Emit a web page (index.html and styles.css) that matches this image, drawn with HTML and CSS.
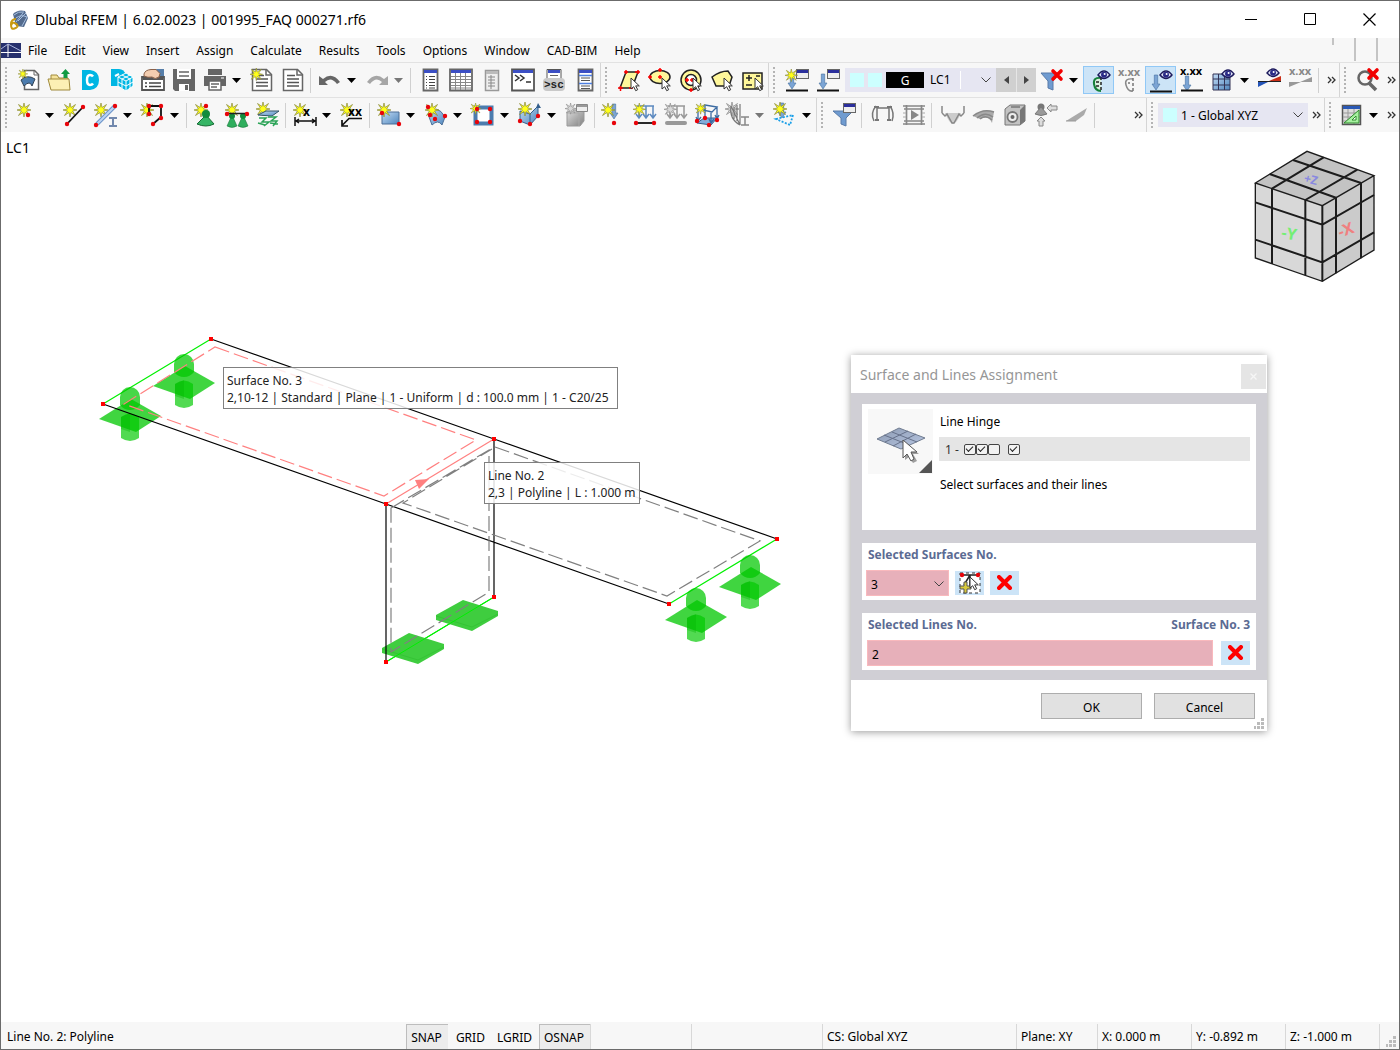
FILE: index.html
```html
<!DOCTYPE html>
<html lang="en">
<head>
<meta charset="utf-8">
<title>Dlubal RFEM</title>
<link rel="stylesheet" href="styles.css">
</head>
<body>
<svg class="defs" width="0" height="0" aria-hidden="true">
  <defs>
    <linearGradient id="blue" x1="0" y1="0" x2="1" y2="1"><stop offset="0" stop-color="#c3dcf5"/><stop offset="1" stop-color="#4f86bd"/></linearGradient>
    <linearGradient id="grey" x1="0" y1="0" x2="1" y2="1"><stop offset="0" stop-color="#dedede"/><stop offset="1" stop-color="#808080"/></linearGradient>
    <linearGradient id="plate" x1="0" y1="0" x2="1" y2="1"><stop offset="0" stop-color="#8c9ab2"/><stop offset="1" stop-color="#b9c8e4"/></linearGradient>
    <path id="star" d="M7 0l1 4.500L12.500 1.500 9.500 6 14 7 9.500 8 12.500 12.500 8 9.500 7 14 6 9.500 1.500 12.500 4.500 8 0 7l4.500-1L1.500 1.500 6 4.500z" fill="#ffff1a" stroke="#8a8a3c" stroke-width=".7"/>
    <path id="star-off" d="M7 0l1 4.500L12.500 1.500 9.500 6 14 7 9.500 8 12.500 12.500 8 9.500 7 14 6 9.500 1.500 12.500 4.500 8 0 7l4.500-1L1.500 1.500 6 4.500z" fill="#d8d8d8" stroke="#909090" stroke-width=".8"/>
    <circle id="dot" r="2.200" fill="#e8040a"/>
    <path id="cross" d="M2 2l8 8M10 2l-8 8" stroke="#f20000" stroke-width="3.600" stroke-linecap="round"/>
    <path id="cursor" d="M0 0v11l2.700-2.300 2 4 2-1-2-3.800H8.300z" fill="#fff" stroke="#333"/>
    <path id="down" d="M-1.700 0h3.400v9H4L0 15-4 9h2.300z" fill="#7ba4d4" stroke="#44709f" stroke-width=".6"/>
    <g id="window"><rect x=".5" y=".5" width="12" height="9" fill="#eee" stroke="#666"/><path d="M1 1h11v3H1z" fill="#2b2f9c"/></g>
    <g id="eye"><path d="M0 5Q6-3 12 5 6 12 0 5z" fill="#dfe3f5" stroke="#1d1a5c" stroke-width="1.400"/><circle cx="6" cy="4.700" r="3" fill="#2a2a86"/><circle cx="6.600" cy="4" r="1" fill="#fff"/></g>
    <g id="pin"><path d="M0 10 5-1l5 11q-5 3-10 0z" fill="#2fae5d" stroke="#156c33" stroke-width=".5"/><circle cx="5" cy="0" r="3" fill="#128c3c"/></g>
    <g id="page"><path d="M2.500 1.500h14l5 5v16h-19z" fill="#fff" stroke="#666" stroke-width="1.500"/><path d="M16 1.500V7h5.500" fill="none" stroke="#666" stroke-width="1.500"/><path d="M6 7.500h8M6 11h12M6 14.500h12M6 18h12" stroke="#555" stroke-width="1.500"/></g>
    <path id="caret" d="M0 0h9L4.500 5z"/>
    <path id="more" d="M1 1l3 3-3 3M5 1l3 3-3 3" fill="none" stroke="#333" stroke-width="1.300"/>
    <g id="support">
      <path d="M153 386l32-20 30 17-25 16z" fill="#10ca10" fill-opacity=".8"/>
      <path d="M174 364a10 10 0 0 1 20 0v8q-4 5-10 5t-10-5z" fill="#00c800" fill-opacity=".72"/>
      <path d="M175 384q9-7 18 0v21q-9 6-18 0z" fill="#00c800" fill-opacity=".68"/>
      <path d="M184 380v19l-9-3v-12z" fill="#00b400" fill-opacity=".35"/>
    </g>
    <g id="base">
      <path d="M436 615l27-15 35 11v5l-26 15-36-11z" fill="#3fcd3f"/>
      <path d="M436 616l36 11 26-13" fill="none" stroke="#35c435"/>
    </g>
  </defs>
</svg>

<div class="app">
  <header class="titlebar">
    <svg class="titlebar__logo" width="20" height="20" viewBox="0 0 20 20"><path d="M4 4q5-5 12-3l3 7-4 9-8-1z" fill="#536b8e"/><path d="M5 5q4-4 10-3M7 8q5-4 11-1M9 11l8-8M7 12 14 3M13 16l5-9" stroke="#a6bfe0" fill="none"/><path d="M7 9Q2 9 2 14.500T5.500 18.500 8.500 15.500 5.500 13 2.500 15" fill="none" stroke="#c99a12" stroke-width="2"/></svg>
    <h1 class="titlebar__text">Dlubal RFEM | 6.02.0023 | 001995_FAQ 000271.rf6</h1>
    <div class="titlebar__controls">
      <button aria-label="Minimize"><svg width="13" height="13"><path d="M0 6.500h12" stroke="#000"/></svg></button>
      <button aria-label="Maximize"><svg width="13" height="13"><path d="M.5.5h11v11H.5z" fill="none" stroke="#000"/></svg></button>
      <button aria-label="Close"><svg width="13" height="13"><path d="M.5.5l12 12M12.500.5l-12 12" stroke="#000" stroke-width="1.200"/></svg></button>
    </div>
  </header>

  <nav class="menu">
    <svg class="menu__logo" width="20" height="15" viewBox="0 0 20 15"><path d="M0 0h20v15H0z" fill="#26306d"/><path d="M0 9.500h20M7 1v13" stroke="#fff"/><path d="M0 6l7-5 13 7" stroke="#aab4dd" fill="none"/></svg>
    <a href="#">File</a><a href="#">Edit</a><a href="#">View</a><a href="#">Insert</a><a href="#">Assign</a><a href="#">Calculate</a><a href="#">Results</a><a href="#">Tools</a><a href="#">Options</a><a href="#">Window</a><a href="#">CAD-BIM</a><a href="#">Help</a>
    <svg class="menu__marks" width="60" height="24"><path d="M12 0v7M34 0v23M56 0v23" stroke="#c4c4c4" stroke-width="2"/></svg>
  </nav>

  <div class="toolrow toolrow--main">
    <div class="toolbar">
      <span class="grip"></span>
      <button class="tool" aria-label="New model"><svg viewBox="0 0 24 24"><path d="M7.500 2.500h10l4 4v15h-14z" fill="#fff" stroke="#666" stroke-width="1.500"/><path d="M17 2.500V7h4.500" fill="none" stroke="#666"/><path d="M4 12q6-6 14-1l-3 7q-2-6-8 0z" fill="#4c7cae" stroke="#345"/><use href="#star" transform="translate(1 1) scale(.7)"/></svg></button>
      <button class="tool" aria-label="Open"><svg viewBox="0 0 24 24"><path d="M3 21V7h6l2 3h9v11z" fill="#f5e39b" stroke="#a08a3c"/><path d="M0 11h21l1 11H3z" fill="#fcf0b4" stroke="#a08a3c"/><path d="M15.500 10V6H13l4.500-5L22 6h-2.500v4z" fill="#0f9a43"/></svg></button>
      <button class="tool" aria-label="Dlubal Center"><svg viewBox="0 0 24 24"><path d="M3 2h8q9 1 9 10t-9 10H3z" fill="#00b6e3"/><path d="M14 8.500q-1-1.500-3-1.500-3 0-3 5t3 5q2 0 3-1.500" fill="none" stroke="#fff" stroke-width="2.500"/></svg></button>
      <button class="tool" aria-label="Block library"><svg viewBox="0 0 24 24"><path d="M1 1h8q5 0 7 6l-7 11H1z" fill="#00b6e3"/><path d="M5 8l4-2" stroke="#fff" stroke-width="2"/><path d="M16 5l7 4v9l-7 5-8-5V9z" fill="#00b6e3" stroke="#fff"/><path d="M8 9l8 4 7-4M16 13v10M12 7l8 4v9M20 7l-8 4v9M8 14l8 4 7-4" fill="none" stroke="#fff"/></svg></button>
      <button class="tool" aria-label="Project manager"><svg viewBox="0 0 24 24"><path d="M15 1h8v10h-8z" fill="#567ea9"/><path d="M1 9h22v13H1z" fill="#fff" stroke="#555" stroke-width="1.800"/><path d="M2 10h20v2H2z" fill="#555"/><path d="M4 15h2M8 15h12M4 18.500h2M8 18.500h12" stroke="#444" stroke-width="1.500"/><path d="M3 6q1-4 7-4.500h5l4 4-1 3.500q-4 3-7 0-4 1-8-1z" fill="#f3cdb0" stroke="#8a6048"/></svg></button>
      <button class="tool" aria-label="Save"><svg viewBox="0 0 24 24"><path d="M1 1h22v22H3l-2-2z" fill="#666"/><path d="M5 1h14v10H5zM7 16h10v7H7z" fill="#fff"/><path d="M7 4h10M7 8h10" stroke="#666" stroke-width="1.500"/><path d="M13 17h3v5h-3z" fill="#666"/></svg></button>
      <button class="tool" aria-label="Print"><svg viewBox="0 0 24 24"><path d="M5 1h14v6H5zM1 8h22v10H1z" fill="#666"/><path d="M6 13h12v9H6z" fill="#fff" stroke="#666" stroke-width="1.500"/><path d="M8 16h8M8 19h6" stroke="#666" stroke-width="1.300"/><path d="M18 10h3" stroke="#fff"/></svg></button>
      <button class="drop" aria-label="Print options"><svg width="9" height="5"><use href="#caret"/></svg></button>
      <button class="tool" aria-label="New report"><svg viewBox="0 0 24 24"><use href="#page"/><use href="#star" transform="scale(.9)"/></svg></button>
      <button class="tool" aria-label="Report"><svg viewBox="0 0 24 24"><use href="#page"/></svg></button>
      <span class="sep"></span>
      <button class="tool" aria-label="Undo"><svg viewBox="0 0 24 24"><path d="M1 8v9h9l-3-3q6-6 12 2l3-2Q14 3 5 11z" fill="#666"/></svg></button>
      <button class="drop" aria-label="Undo list"><svg width="9" height="5"><use href="#caret"/></svg></button>
      <button class="tool" aria-label="Redo"><svg viewBox="0 0 24 24"><path d="M23 8v9h-9l3-3q-6-6-12 2l-3-2Q10 3 19 11z" fill="#a6a6a6"/></svg></button>
      <button class="drop" aria-label="Redo list"><svg width="9" height="5"><use href="#caret" fill="#777"/></svg></button>
      <span class="sep"></span>
      <button class="tool" aria-label="Navigator"><svg viewBox="0 0 24 24"><path d="M5.500 1.500h14v21h-14z" fill="#fff" stroke="#666" stroke-width="1.800"/><path d="M6 2h13v3H6z" fill="#3c4fc4"/><path d="M8 8.500h1M11 8.500h6M8 11.500h1M11 11.500h6M8 14.500h1M11 14.500h6M8 17.500h1M11 17.500h6M8 20h1M11 20h6" stroke="#444"/></svg></button>
      <button class="tool" aria-label="Tables"><svg viewBox="0 0 24 24"><path d="M1 1.500h22v21H1z" fill="#fff" stroke="#666" stroke-width="1.800"/><path d="M2 2h20v3H2z" fill="#3c4fc4"/><path d="M2 8.500h20M2 11.500h20M2 14.500h20M2 17.500h20M2 20h20M6.500 5v17M11.500 5v17M16.500 5v17" stroke="#888"/></svg></button>
      <button class="tool" aria-label="Panel"><svg viewBox="0 0 24 24"><path d="M5.500 2.500h13v20h-13z" fill="#eee" stroke="#999" stroke-width="1.500"/><path d="M6 3h12v3H6z" fill="#bbb"/><path d="M8 9h7M8 12h7M8 15h7M8 18h7M11 7v14" stroke="#888"/></svg></button>
      <button class="tool" aria-label="Console"><svg viewBox="0 0 24 24"><path d="M1 1.500h22v21H1z" fill="#fff" stroke="#555" stroke-width="1.800"/><path d="M2 2h20v3H2z" fill="#3c4fc4"/><path d="M4 7l4 3-4 3M9 7l4 3-4 3M15 14h5" fill="none" stroke="#333" stroke-width="1.500"/></svg></button>
      <button class="tool" aria-label="Script manager"><svg viewBox="0 0 24 24"><path d="M5 1.500h14v12H5z" fill="#fff" stroke="#555"/><path d="M6 2h12v3H6z" fill="#3c4fc4"/><path d="M8 7.500h8" stroke="#666"/><rect x="1" y="10" width="22" height="13" rx="4" fill="#c9c9c9"/><text x="2" y="20" class="glyph glyph--mono">&gt;sc</text></svg></button>
      <button class="tool" aria-label="Data panel"><svg viewBox="0 0 24 24"><path d="M5.500 1.500h14v21h-14z" fill="#fff" stroke="#666" stroke-width="1.800"/><path d="M6 2h13v3H6z" fill="#3c4fc4"/><path d="M8 10h9M8 12.500h9M8 18h9M8 20.500h9" stroke="#555"/><path d="M6 7.500h13M6 15.500h13" stroke="#4d7fe0" stroke-width="1.500"/></svg></button>
    </div>
    <div class="toolbar">
      <span class="grip"></span>
      <button class="tool" aria-label="Select by parallelogram"><svg viewBox="0 0 24 24"><path d="M3 20 9 4h12l-6 16z" fill="#fff79a" stroke="#222" stroke-width="1.500"/><path d="M1 20h5M3.500 18v5M7 4h4M9 2v4M18 4h5M21 2v4M12 20h4" stroke="#f00" stroke-width="1.500"/><use href="#cursor" x="14" y="10"/></svg></button>
      <button class="tool" aria-label="Select by ellipse"><svg viewBox="0 0 24 24"><ellipse cx="12" cy="9" rx="10" ry="6.500" fill="#fff79a" stroke="#222" stroke-width="1.500"/><path d="M0 9h4M2 7v4M10 2h4M12 0v4M10 9h4M12 7v4" stroke="#f00" stroke-width="1.500"/><use href="#cursor" x="14" y="10"/></svg></button>
      <button class="tool" aria-label="Select by ring"><svg viewBox="0 0 24 24"><circle cx="12" cy="12" r="10" fill="#fff79a" stroke="#222" stroke-width="1.500"/><circle cx="12" cy="12" r="5.500" fill="#fff" stroke="#222" stroke-width="1.500"/><path d="M6 12h4M8 10v4M11 12h4M13 10v4M10 22h4M12 20v4" stroke="#f00" stroke-width="1.500"/><use href="#cursor" x="14" y="10"/></svg></button>
      <button class="tool" aria-label="Select by polygon"><svg viewBox="0 0 24 24"><path d="M2 9q8-6 16-6l4 6-3 9H6z" fill="#fff79a" stroke="#222" stroke-width="1.500"/><use href="#cursor" x="14" y="10"/></svg></button>
      <button class="tool" aria-label="Add or remove selection"><svg viewBox="0 0 24 24"><path d="M2 5h19v16H2z" fill="#fff79a" stroke="#222" stroke-width="1.500"/><path d="M5 10h6M8 7v6M5 17h6M15 8h4" stroke="#222" stroke-width="1.500"/><use href="#cursor" x="14" y="10"/></svg></button>
    </div>
    <div class="toolbar toolbar--grow">
      <span class="grip"></span>
      <button class="tool" aria-label="New load case"><svg viewBox="0 0 24 24"><use href="#down" x="7" y="6"/><use href="#window" x="11" y="1"/><use href="#star" transform="translate(0 1) scale(.9)"/><path d="M1 22.500h22" stroke="#111" stroke-width="2"/></svg></button>
      <button class="tool" aria-label="Load cases"><svg viewBox="0 0 24 24"><use href="#down" x="7" y="6"/><use href="#window" x="11" y="1"/><path d="M1 22.500h22" stroke="#111" stroke-width="2"/></svg></button>
      <label class="combo combo--case">
        <i class="swatch"></i><i class="swatch"></i><b class="badge">G</b>
        <select class="combo__select combo__select--ruled" aria-label="Load case"><option>LC1</option></select>
        <svg class="combo__arrow" width="10" height="6"><path d="M.5.5l4.500 4.500L9.500.5" fill="none" stroke="#444"/></svg>
      </label>
      <button class="step" aria-label="Previous"><svg width="5" height="8"><path d="M5 0v8L0 4z" fill="#444"/></svg></button>
      <button class="step" aria-label="Next"><svg width="5" height="8"><path d="M0 0v8l5-4z" fill="#444"/></svg></button>
      <button class="tool" aria-label="Clear filter"><svg viewBox="0 0 24 24"><path d="M1 5h18l-6 8v9l-5-2v-7z" fill="#6f9bd0" stroke="#587aa8"/><use href="#cross" x="11" y="1"/></svg></button>
      <button class="drop" aria-label="Filter options"><svg width="9" height="5"><use href="#caret"/></svg></button>
      <button class="tool tool--on" aria-label="Show results"><svg viewBox="0 0 24 24"><path d="M14 10Q6 9 7 16t7 7" fill="#d9f0df" stroke="#15803a" stroke-width="2"/><path d="M14 9v15M12 14H8M12 18H8" stroke="#222" stroke-width="1.500" stroke-dasharray="3 2"/><use href="#eye" x="11" y="2"/></svg></button>
      <button class="tool" aria-label="Result values"><svg viewBox="0 0 24 24"><text x="0" y="8" class="glyph glyph--off">x.xx</text><path d="M15 11Q6 10 8 17t7 6" fill="none" stroke="#888" stroke-width="1.500"/><path d="M15 10v13M12 15h-2" stroke="#777" stroke-width="1.500" stroke-dasharray="3 2"/></svg></button>
      <button class="tool tool--on" aria-label="Show loads"><svg viewBox="0 0 24 24"><use href="#down" x="7" y="7"/><use href="#eye" x="11" y="2"/><path d="M1 23.500h22" stroke="#111" stroke-width="2"/></svg></button>
      <button class="tool" aria-label="Load values"><svg viewBox="0 0 24 24"><use href="#down" x="7" y="8"/><text x="0" y="7" class="glyph">x.xx</text><path d="M1 22.500h22" stroke="#111" stroke-width="2"/></svg></button>
      <button class="tool" aria-label="Show mesh"><svg viewBox="0 0 24 24"><path d="M2 6h17v16H2z" fill="url(#blue)" stroke="#335"/><path d="M7.500 6v16M13.500 6v16M2 11h17M2 17h17" stroke="#335"/><use href="#eye" x="11" y="1"/></svg></button>
      <button class="drop" aria-label="Mesh options"><svg width="9" height="5"><use href="#caret"/></svg></button>
      <button class="tool" aria-label="Result diagram"><svg viewBox="0 0 24 24"><path d="M0 13h12L0 19z" fill="#2454b8"/><path d="M11 13 23 8v5z" fill="#c92e17"/><path d="M0 13.500h23" stroke="#222"/><use href="#eye" x="9" y="0"/></svg></button>
      <button class="tool" aria-label="Diagram values"><svg viewBox="0 0 24 24"><text x="0" y="7" class="glyph glyph--off">x.xx</text><path d="M0 14h12L0 19zM11 14l12-5v5z" fill="#999"/></svg></button>
      <span class="sep"></span>
      <button class="more" aria-label="More tools"><svg width="9" height="8"><use href="#more"/></svg></button>
    </div>
    <div class="toolbar">
      <span class="grip"></span>
      <button class="tool" aria-label="Cancel zoom"><svg viewBox="0 0 24 24"><circle cx="9" cy="10" r="6.500" fill="none" stroke="#666" stroke-width="2.500"/><path d="M13 15l7 7" stroke="#666" stroke-width="3.500"/><use href="#cross" x="11" y="0"/></svg></button>
      <button class="more" aria-label="More tools"><svg width="9" height="8"><use href="#more"/></svg></button>
    </div>
  </div>

  <div class="toolrow">
    <div class="toolbar">
      <span class="grip"></span>
      <button class="tool" aria-label="New node"><svg viewBox="0 0 24 24"><use href="#star" x="1" y="0"/><use href="#dot" x="12" y="12"/></svg></button>
      <button class="drop" aria-label="Node options"><svg width="9" height="5"><use href="#caret"/></svg></button>
      <button class="tool" aria-label="New line"><svg viewBox="0 0 24 24"><use href="#star" x="0" y="0"/><path d="M4 21 20 4" stroke="#111" stroke-width="1.800"/><use href="#dot" x="4" y="21"/><use href="#dot" x="20" y="4"/></svg></button>
      <button class="tool" aria-label="New member"><svg viewBox="0 0 24 24"><use href="#star" x="0" y="0"/><path d="M3 21 21 3" stroke="#6c94c9" stroke-width="4"/><path d="M3 21 21 3" stroke="#bcd5f2" stroke-width="2"/><use href="#dot" x="2" y="22"/><use href="#dot" x="21" y="3"/><path d="M15 15h8M15 23h8M19 15v8" stroke="#7188ad" stroke-width="2"/></svg></button>
      <button class="drop" aria-label="Member options"><svg width="9" height="5"><use href="#caret"/></svg></button>
      <button class="tool" aria-label="New polyline"><svg viewBox="0 0 24 24"><use href="#star" x="-1" y="0"/><path d="M8 11V3h12v11l-8 7" fill="none" stroke="#111" stroke-width="1.800"/><use href="#dot" x="8" y="3"/><use href="#dot" x="20" y="3"/><use href="#dot" x="8" y="11"/><use href="#dot" x="20" y="15"/><use href="#dot" x="12" y="21"/></svg></button>
      <button class="drop" aria-label="Polyline options"><svg width="9" height="5"><use href="#caret"/></svg></button>
      <span class="sep"></span>
      <button class="tool" aria-label="Nodal support"><svg viewBox="0 0 24 24"><use href="#star" x="0" y="0"/><path d="M3 21l9-9 8 9q-8 4-17 0z" fill="#35b565" stroke="#176b35"/><circle cx="12" cy="11" r="4" fill="#128c3c"/><use href="#dot" x="12" y="3"/></svg></button>
      <button class="tool" aria-label="Line support"><svg viewBox="0 0 24 24"><use href="#star" x="0" y="0"/><use href="#pin" x="2" y="13"/><use href="#pin" x="13" y="13"/><path d="M2 10.500h20" stroke="#222" stroke-width="1.500"/><use href="#dot" x="2" y="11"/><use href="#dot" x="22" y="11"/></svg></button>
      <button class="tool" aria-label="Surface support"><svg viewBox="0 0 24 24"><use href="#star" x="0" y="-1"/><path d="M2 12l8-4h13l-7 5z" fill="url(#blue)" stroke="#356"/><path d="M3 15h7l-4 4h7l-5 4M12 14h8l-5 4h6l-4 5M2 20l7 2M14 20l8 1" fill="none" stroke="#2aa356" stroke-width="1.500"/></svg></button>
      <span class="sep"></span>
      <button class="tool" aria-label="Dimension"><svg viewBox="0 0 24 24"><use href="#star" x="0" y="0"/><path d="M2 14v9M23 14v9M3 18h19M6 16l-3 2 3 2M19 16l3 2-3 2" fill="none" stroke="#111" stroke-width="1.500"/><text x="10" y="13" class="glyph glyph--big">x</text></svg></button>
      <button class="drop" aria-label="Dimension options"><svg width="9" height="5"><use href="#caret"/></svg></button>
      <button class="tool" aria-label="Note"><svg viewBox="0 0 24 24"><use href="#star" x="0" y="0"/><path d="M22 15.500H9l-7 7M2 17v6h6" fill="none" stroke="#111" stroke-width="1.700"/><text x="8" y="13" class="glyph glyph--big">xx</text></svg></button>
      <span class="sep"></span>
      <button class="tool" aria-label="New surface"><svg viewBox="0 0 24 24"><path d="M5 9h17v12H5z" fill="url(#blue)" stroke="#4c6f97"/><use href="#star" x="0" y="0"/><use href="#dot" x="5" y="10"/><use href="#dot" x="22" y="21"/></svg></button>
      <button class="drop" aria-label="Surface options"><svg width="9" height="5"><use href="#caret"/></svg></button>
      <button class="tool" aria-label="Curved surface"><svg viewBox="0 0 24 24"><path d="M4 11q9-11 17 3l-3 8q-4-6-10 0z" fill="url(#blue)" stroke="#4c6f97"/><use href="#star" x="1" y="0"/><use href="#dot" x="4" y="4"/><use href="#dot" x="6" y="12"/><use href="#dot" x="11" y="16"/><use href="#dot" x="21" y="13"/></svg></button>
      <button class="drop" aria-label="Curved surface options"><svg width="9" height="5"><use href="#caret"/></svg></button>
      <button class="tool" aria-label="New opening"><svg viewBox="0 0 24 24"><path d="M4.500 4.500h16v16h-16z" fill="#fff" stroke="#4c7cae" stroke-width="4"/><use href="#star" transform="translate(-1 0) scale(.8)"/><use href="#dot" x="6" y="6"/><use href="#dot" x="19" y="6"/><use href="#dot" x="6" y="19"/><use href="#dot" x="19" y="19"/></svg></button>
      <button class="drop" aria-label="Opening options"><svg width="9" height="5"><use href="#caret"/></svg></button>
      <button class="tool" aria-label="New solid"><svg viewBox="0 0 24 24"><path d="M2 8l10 3 8-8v10l-8 9-10-4z" fill="url(#blue)" stroke="#345e8c"/><path d="M12 11v11" stroke="#345e8c"/><use href="#star" x="0" y="-1"/><use href="#dot" x="2" y="18"/><use href="#dot" x="12" y="21"/><use href="#dot" x="20" y="13"/><path d="M20 0l3 5h-5z" fill="#345e8c"/></svg></button>
      <button class="drop" aria-label="Solid options"><svg width="9" height="5"><use href="#caret"/></svg></button>
      <button class="tool" aria-label="New block"><svg viewBox="0 0 24 24"><path d="M2 10l4-3h13v11l-4 5H2z" fill="url(#grey)" stroke="#999"/><path d="M2 10h12v13" fill="none" stroke="#aaa"/><use href="#star-off" transform="scale(.8)"/><path d="M11.500 1.500h11v7h-11z" fill="#eee" stroke="#888"/><path d="M12 2h10v2H12z" fill="#999"/></svg></button>
      <span class="sep"></span>
      <button class="tool" aria-label="Nodal load"><svg viewBox="0 0 24 24"><use href="#down" x="12" y="1"/><use href="#star" x="-1" y="0"/><use href="#dot" x="12" y="20"/></svg></button>
      <button class="tool" aria-label="Line load"><svg viewBox="0 0 24 24"><path d="M4 3h17M6 3v11M13 3v11M20 3v11M3 11l3 4 3-4M10 11l3 4 3-4M17 11l3 4 3-4" fill="none" stroke="#5d8ac0" stroke-width="1.500"/><use href="#star" transform="scale(.9)"/><path d="M3 20h18" stroke="#111" stroke-width="1.800"/><use href="#dot" x="3" y="20"/><use href="#dot" x="21" y="20"/></svg></button>
      <button class="tool" aria-label="Member load"><svg viewBox="0 0 24 24"><path d="M4 3h17M6 3v11M13 3v11M20 3v11M3 11l3 4 3-4M10 11l3 4 3-4M17 11l3 4 3-4" fill="none" stroke="#999" stroke-width="1.500"/><use href="#star-off" transform="scale(.9)"/><path d="M3 20h18" stroke="#999" stroke-width="4" stroke-linecap="round"/></svg></button>
      <button class="tool" aria-label="Surface load"><svg viewBox="0 0 24 24"><path d="M2 20l7-5h13l-6 7z" fill="#82addb" stroke="#345e8c"/><path d="M3 6l7-4 12 2-5 5zM3 6v12M10 3v11M22 4v12M16 9v11M1 14l2 4 3-4M14 16l2 4 3-4M20 12l2 4 2-4" fill="none" stroke="#3b6ba2" stroke-width="1.300"/><use href="#star" transform="scale(.8)"/><use href="#dot" x="2" y="18"/><use href="#dot" x="10" y="15"/><use href="#dot" x="22" y="17"/><use href="#dot" x="14" y="22"/></svg></button>
      <button class="tool" aria-label="Imperfection"><svg viewBox="0 0 24 24"><use href="#star-off" x="-1" y="-1"/><path d="M5 3q-2 13 9 19M5 3l9 19V1M8 4v12M11 2v16" fill="none" stroke="#777" stroke-width="1.200"/><path d="M15 14h8M15 22h8M19 14v8" stroke="#888" stroke-width="1.500"/></svg></button>
      <button class="drop" aria-label="Imperfection options"><svg width="9" height="5"><use href="#caret" fill="#777"/></svg></button>
      <button class="tool" aria-label="Free load"><svg viewBox="0 0 24 24"><use href="#down" x="9" y="0"/><use href="#star" x="0" y="-1"/><path d="M3 16l17-4-3 10z" fill="none" stroke="#199fe8" stroke-width="1.800" stroke-dasharray="2 1.500"/></svg></button>
      <button class="drop" aria-label="Free load options"><svg width="9" height="5"><use href="#caret"/></svg></button>
    </div>
    <div class="toolbar toolbar--grow toolbar--results">
      <span class="grip"></span>
      <button class="tool" aria-label="Filter"><svg viewBox="0 0 24 24"><path d="M1 8h20l-7 7v8l-5-2v-6z" fill="#6f9bd0" stroke="#587aa8"/><use href="#window" x="11" y="0"/></svg></button>
      <span class="sep"></span>
      <button class="tool" aria-label="Deformation"><svg viewBox="0 0 24 24"><path d="M6 5h12M6 4v12M18 4v12M5 3Q-1 10 3 18M19 3q5 7 2 15" fill="none" stroke="#777" stroke-width="1.500"/><path d="M3 4h5M16 4h5M4 17h4M16 17h4" stroke="#777" stroke-width="2"/></svg></button>
      <button class="tool" aria-label="Animation"><svg viewBox="0 0 24 24"><path d="M1 3h22M1 21h22M2 6h20M2 18h20M4.500 2v20M19.500 2v20" stroke="#888" stroke-width="1.700"/><path d="M9 7v10l8-5z" fill="#888"/><path d="M1 10h3M1 14h3M20 10h3M20 14h3" stroke="#aaa"/></svg></button>
      <span class="sep"></span>
      <button class="tool" aria-label="Member results"><svg viewBox="0 0 24 24"><path d="M4 10h16q-4 10-8 11-4-1-8-11z" fill="#ccc"/><path d="M1 10l3 3 2-2 5 9h2l5-9 2 2 3-3M23 10V3M1 10V3" fill="none" stroke="#888" stroke-width="1.500"/></svg></button>
      <button class="tool" aria-label="Surface results"><svg viewBox="0 0 24 24"><path d="M1 13q10-8 21-4l-2 11q-3-8-12-4z" fill="#aaa"/><path d="M1 13q10-8 21-4M5 15q8-7 16-1M8 16q6-5 12 1" fill="none" stroke="#888" stroke-width="1.500"/></svg></button>
      <button class="tool" aria-label="Solid results"><svg viewBox="0 0 24 24"><path d="M2 6l5-4h15v16l-5 4H2z" fill="#c3c3c3" stroke="#777"/><path d="M17 7l5-5v16l-5 4z" fill="#777"/><circle cx="9.500" cy="14" r="5" fill="#eee" stroke="#777" stroke-width="1.800"/><circle cx="9.500" cy="14" r="2" fill="#666"/><path d="M8 4h9" stroke="#777" stroke-width="1.500"/></svg></button>
      <button class="tool" aria-label="Reactions"><svg viewBox="0 0 24 24"><circle cx="7" cy="4" r="3.500" fill="#777"/><path d="M1 11l6-7 6 7q-6 3-12 0z" fill="#999" stroke="#777"/><path d="M7 14l4 4H9v5H5v-5H3zM13 5l4-4v2h6v4h-6v2z" fill="#ddd" stroke="#888"/></svg></button>
      <button class="tool" aria-label="Sections"><svg viewBox="0 0 24 24"><path d="M1 18 22 5l-3 7-8 6z" fill="#aaa"/><path d="M1 18h10" fill="none" stroke="#999"/></svg></button>
      <span class="sep"></span>
      <button class="more" aria-label="More tools"><svg width="9" height="8"><use href="#more"/></svg></button>
    </div>
    <div class="toolbar">
      <span class="grip"></span>
      <label class="combo combo--axes">
        <i class="swatch"></i>
        <select class="combo__select" aria-label="Coordinate system"><option>1 - Global XYZ</option></select>
        <svg class="combo__arrow" width="10" height="6"><path d="M.5.5l4.500 4.500L9.500.5" fill="none" stroke="#444"/></svg>
      </label>
      <button class="more" aria-label="More tools"><svg width="9" height="8"><use href="#more"/></svg></button>
    </div>
    <div class="toolbar">
      <span class="grip"></span>
      <button class="tool" aria-label="Work plane"><svg viewBox="0 0 24 24"><path d="M2.500 2.500h18v19h-18z" fill="#ddd" stroke="#555" stroke-width="1.500"/><path d="M3 3h17v3H3z" fill="#2a59b5"/><path d="M3 10h17M3 14h17M3 18h17M8 6v15M14 6v15" stroke="#999"/><path d="M4 20 19 7v13z" fill="#a6f0a0" stroke="#2f8a2c"/><path d="M12 17l4-4v4z" fill="#fff" stroke="#2f8a2c"/></svg></button>
      <button class="drop" aria-label="Work plane options"><svg width="9" height="5"><use href="#caret"/></svg></button>
      <button class="more" aria-label="More tools"><svg width="9" height="8"><use href="#more"/></svg></button>
    </div>
  </div>

  <main class="view">
    <svg class="model" viewBox="1 132 1398 890" preserveAspectRatio="xMinYMin meet">
      <g fill="none" stroke="#00f000" stroke-width="1.200"><path d="M211 339 103 404M777 539 669 604M386 662l108-65"/></g>
      <use href="#support"/><use href="#support" x="-54" y="33"/>
      <use href="#support" x="566" y="201"/><use href="#support" x="512" y="234"/>
      <use href="#base"/><use href="#base" x="-54" y="33"/>
      <path d="M386 662l108-65" stroke="#00f000"/>
      <g fill="none" stroke="#000" stroke-width="1.200"><path d="M211 339l283 100 283 100M103 404l283 100 283 100M386 504v158M494 439v158"/></g>
      <g fill="none" stroke="#ff8080" stroke-width="1.200" stroke-dasharray="15 5"><path d="M215 347l261 93-92 56-260-92z"/></g>
      <g fill="none" stroke="#808080" stroke-width="1.200" stroke-dasharray="15 5"><path d="M495 447l265 94-93 55-264-93 89-54M391 508l98-58v142l-98 60z"/></g>
      <path d="M386 504l108-65" stroke="#ff8080" stroke-width="1.200"/>
      <path d="M415 480l14-1-10 10z" fill="#ff8080"/>
      <g fill="#f00"><path d="M209 337h4v4h-4zM101 402h4v4h-4zM384 502h4v4h-4zM492 437h4v4h-4zM775 537h4v4h-4zM667 602h4v4h-4zM384 660h4v4h-4zM492 595h4v4h-4z"/></g>
    </svg>
    <p class="view__case">LC1</p>
    <svg class="cube" width="123" height="135" viewBox="40 25 369 405">
      <path d="M47 127 202 32l201 73-155 90z" fill="#c3c3c3"/>
      <path d="M47 127l201 68v227L47 352z" fill="#d8d8d8"/>
      <path d="M248 195l155-90v223l-155 94z" fill="#cbcbcb"/>
      <g fill="none" stroke="#1c1c1c" stroke-width="6"><path d="M97 144 252 50M197 178l156-91M90 100l201 72M160 58l204 69M97 144v226M197 178v226M47 185l201 67 155-89M47 297l201 68 155-90M289 172v226M364 127v226M248 195v227"/></g>
      <path d="M47 127 202 32l201 73-155 90zM47 127v225l201 70 155-94V105" fill="none" stroke="#1c1c1c" stroke-width="4"/>
      <text x="192" y="132" class="cube__mark cube__mark--z" transform="rotate(14 225 122)">+Z</text>
      <text x="123" y="296" class="cube__mark cube__mark--y" transform="rotate(10 150 293)">-Y</text>
      <text x="300" y="283" class="cube__mark cube__mark--x" transform="rotate(-20 324 283)">-X</text>
    </svg>
    <div class="tip tip--surface">Surface No. 3<br>2,10-12 | Standard | Plane | 1 - Uniform | d : 100.0 mm | 1 - C20/25</div>
    <div class="tip tip--line">Line No. 2<br>2,3 | Polyline | L : 1.000 m</div>

    <section class="dialog" role="dialog" aria-labelledby="dialog-title">
      <header class="dialog__head">
        <h2 id="dialog-title">Surface and Lines Assignment</h2>
        <button class="dialog__close" aria-label="Close"><svg width="7" height="7"><path d="M.5.5l6 6M6.500.5l-6 6" stroke="#f6f6f6" stroke-width="1.300"/></svg></button>
      </header>
      <div class="dialog__body">
        <div class="panel panel--type">
          <button class="thumb" aria-label="Selection mode">
            <svg width="65" height="65" viewBox="0 0 65 65"><path d="M9 30l22-11 26 10-24 11z" fill="url(#plate)" stroke="#707c90"/><path d="M16 26l25 10M24 23l25 10M17 33l23-11M25 37l23-12" stroke="#66718a"/><path d="M37 34v17l4-3 4 6 4-2-4-7h6z" fill="#444" opacity=".5"/><path d="M35 31v18l4-4 4 7 3-2-3-7h6z" fill="#fff" stroke="#555"/><path d="M64 51v13H51z" fill="#555"/></svg>
          </button>
          <div class="panel__info">
            <h3>Line Hinge</h3>
            <div class="hinge"><span>1 - </span>
              <input type="checkbox" class="tick" aria-label="ux" checked><input type="checkbox" class="tick" aria-label="uy" checked><input type="checkbox" class="tick" aria-label="uz"><input type="checkbox" class="tick tick--apart" aria-label="phi x" checked>
            </div>
            <p>Select surfaces and their lines</p>
          </div>
        </div>
        <div class="panel">
          <div class="panel__head"><label for="surfaces">Selected Surfaces No.</label></div>
          <div class="panel__row">
            <span class="field field--pick"><select id="surfaces"><option>3</option></select><svg class="combo__arrow" width="10" height="6"><path d="M.5.5l4.500 4.500L9.500.5" fill="none" stroke="#444"/></svg></span>
            <button class="action" aria-label="Select in graphic"><svg width="22" height="22" viewBox="0 0 22 22"><path d="M1 1h20v20H1z" fill="#fff" stroke="#333" stroke-dasharray="3 3"/><path d="M3 3h15M11 3 5 13M11 3v12" stroke="#222" stroke-width="1.500"/><use href="#dot" x="3" y="3"/><use href="#dot" x="19" y="3"/><path d="M5 10h3v4h4v3H8v4H5v-4H1v-3h4z" fill="#d8ca3c" stroke="#555"/><use href="#cursor" x="11" y="5"/></svg></button>
            <button class="action" aria-label="Clear surfaces"><svg width="16" height="16" viewBox="0 0 16 16"><path d="M2 2l11 11M13 2 2 13" stroke="#f00" stroke-width="4" stroke-linecap="round"/></svg></button>
          </div>
        </div>
        <div class="panel">
          <div class="panel__head"><label for="lines">Selected Lines No.</label><span>Surface No. 3</span></div>
          <div class="panel__row panel__row--wide">
            <input class="field" id="lines" type="text" value="2">
            <button class="action" aria-label="Clear lines"><svg width="16" height="16" viewBox="0 0 16 16"><path d="M2 2l11 11M13 2 2 13" stroke="#f00" stroke-width="4" stroke-linecap="round"/></svg></button>
          </div>
        </div>
      </div>
      <footer class="dialog__foot">
        <button class="push">OK</button><button class="push">Cancel</button>
        <svg class="resize" width="10" height="11"><path d="M7 0h3v3H7zM7 4h3v3H7zM3 4h3v3H3zM7 8h3v3H7zM3 8h3v3H3zM0 8h2v3H0z" fill="#bbb"/></svg>
      </footer>
    </section>
  </main>

  <footer class="status">
    <span class="status__message">Line No. 2: Polyline</span>
    <button class="mode mode--on">SNAP</button><button class="mode">GRID</button><button class="mode">LGRID</button><button class="mode mode--on">OSNAP</button>
    <span class="cell cell--a"></span><span class="cell cell--b"></span><span class="cell cell--c">CS: Global XYZ</span><span class="cell cell--d">Plane: XY</span><span class="cell">X: 0.000 m</span><span class="cell">Y: -0.892 m</span><span class="cell">Z: -1.000 m</span>
    <span class="cell cell--grip"><svg width="10" height="11"><path d="M7 0h3v3H7zM7 4h3v3H7zM3 4h3v3H3zM7 8h3v3H7zM3 8h3v3H3zM0 8h2v3H0z" fill="#bbb"/></svg></span>
  </footer>
</div>
</body>
</html>
```
FILE: styles.css
```css
* { box-sizing: border-box; }
body { margin: 0; font: 12px/17px "Noto Sans", sans-serif; color: #000; background: #fff; }
h1, h2, h3, p { margin: 0; font-size: inherit; font-weight: normal; }
button, input, select { font: inherit; color: inherit; }
button { padding: 0; border: 0; background: none; }
a { color: inherit; text-decoration: none; }
svg { display: block; }
.defs { position: absolute; }

.app { display: flex; flex-direction: column; height: 100vh; border: 1px solid #6b6b6b; }

.titlebar { display: flex; align-items: center; height: 37px; flex: none; padding-left: 8px; gap: 6px; }
.titlebar__text { font-size: 14px; line-height: 20px; flex: 1; }
.titlebar__controls { display: flex; }
.titlebar__controls button { width: 59px; height: 37px; display: flex; align-items: center; justify-content: center; }

.menu { display: flex; align-items: center; gap: 17px; height: 24px; flex: none; background: #f7f7f7; }
.menu__logo { margin-right: -10px; }
.menu__marks { margin-left: auto; margin-right: 18px; }

.toolrow { display: flex; height: 35px; flex: none; background: #f7f7f7; border-top: 1px solid #e2e2e2; }
.toolbar { display: flex; align-items: center; flex: none; }
.toolbar + .toolbar { border-left: 1px solid #d5d5d5; }
.toolbar--grow { flex: 1; min-width: 0; }
.grip { width: 11px; height: 26px; flex: none; background: repeating-linear-gradient(#b4b4b4 0 2px, transparent 2px 4px) 4px 0 / 2px 26px no-repeat; }
.toolrow--main .grip { width: 12px; }
.tool { width: 31px; height: 28px; flex: none; display: flex; align-items: center; justify-content: center; }
.tool svg { width: 24px; height: 24px; overflow: visible; }
.tool--on { background: #cce4f7; border: 1px solid #90c8f6; }
.drop { width: 16px; height: 28px; flex: none; display: flex; align-items: center; padding-left: 2px; }
.sep { width: 6px; height: 25px; flex: none; background: linear-gradient(#d0d0d0, #d0d0d0) 2px 0 / 1px 100% no-repeat; }
.toolbar--results .sep { width: 8px; }
.more { width: 16px; height: 28px; flex: none; display: flex; align-items: center; justify-content: center; }
.toolbar--grow .more { margin-left: auto; }
.glyph { font: bold 11px "Noto Sans", sans-serif; }
.glyph--off { fill: #888; }
.glyph--big { font-size: 12px; }
.glyph--mono { font: bold 11px "Liberation Mono", monospace; fill: #222; }

.combo { display: flex; align-items: center; gap: 4px; height: 24px; flex: none; background: #e6e6f2; padding: 0 5px; }
.combo--case { width: 151px; margin-left: 2px; }
.combo--axes { width: 150px; }
.combo__select { flex: 1; min-width: 0; height: 24px; padding: 0; border: 0; appearance: none; background: none; outline: 0; }
.combo__select--ruled { height: 18px; line-height: 18px; border-right: 1px solid #fff; margin-right: 16px; }
.combo__arrow { flex: none; pointer-events: none; }
.swatch { width: 14px; height: 14px; background: #ccffff; flex: none; }
.badge { width: 38px; height: 16px; line-height: 17px; background: #000; color: #fff; font-weight: normal; text-align: center; flex: none; margin-right: 2px; }
.step { width: 20px; height: 24px; background: #d0d0d0; flex: none; display: flex; align-items: center; justify-content: center; }
.step + .step { border-left: 1px solid #e6e6e6; }

.view { position: relative; flex: 1; min-height: 0; overflow: hidden; background: #fff; }
.model { width: 100%; height: 100%; }
.view__case { position: absolute; left: 5px; top: 6px; font-size: 14px; line-height: 20px; }
.cube { position: absolute; right: 23px; top: 17px; }
.cube__mark { font: bold 48px "Noto Sans", sans-serif; }
.cube__mark--z { fill: #8888e0; font-size: 36px; }
.cube__mark--y { fill: #74ee74; }
.cube__mark--x { fill: #f08080; }
.tip { position: absolute; padding: 4px 3px 2px; border: 1px solid #808080; background: rgba(255, 255, 255, .85); color: #222; white-space: nowrap; }
.tip--surface { left: 222px; top: 235px; padding-right: 8px; }
.tip--line { left: 483px; top: 330px; }

.dialog { position: absolute; left: 850px; top: 223px; width: 416px; background: #fff; box-shadow: 0 1px 8px rgba(0, 0, 0, .4); }
.dialog__head { display: flex; align-items: center; justify-content: space-between; height: 38px; padding: 3px 1px 1px 9px; color: #969696; }
.dialog__head h2 { font-size: 14px; line-height: 20px; }
.dialog__close { width: 25px; height: 25px; margin-top: 3px; background: #e5e5e5; display: flex; align-items: center; justify-content: center; }
.dialog__body { display: flex; flex-direction: column; gap: 13px; padding: 11px 11px 10px; background: #d0cfd5; }
.panel { background: #fff; padding: 3px 6px 4px 4px; }
.panel--type { display: flex; gap: 6px; min-height: 126px; padding: 5px 6px; }
.thumb { width: 65px; height: 65px; flex: none; background: #f8f8f8; }
.panel__info { flex: 1; padding-top: 4px; }
.panel__info h3, .panel__info p { padding-left: 1px; }
.hinge { display: flex; align-items: center; height: 24px; margin: 7px 0 15px; padding-left: 6px; background: #e5e5e5; color: #333; }
.hinge span { white-space: pre; margin-right: 2px; }
.tick { appearance: none; width: 12px; height: 11px; margin: 0; border: 1px solid #444; border-radius: 2px; background: #f2f2f2; display: grid; place-items: center; }
.tick:checked::before { content: ""; width: 6px; height: 3px; border: solid #222; border-width: 0 0 1px 1px; transform: rotate(-45deg); margin-bottom: 2px; }
.tick--apart { margin-left: 8px; }
.panel__head { display: flex; justify-content: space-between; padding-left: 2px; color: #5b6b93; font-weight: bold; }
.panel__row { display: flex; align-items: center; gap: 6px; margin-top: 7px; }
.panel__row--wide { padding-left: 1px; gap: 8px; }
.field { height: 26px; border: 1px solid #f9b9bd; background: #e7b0ba; outline: 0; padding: 2px 4px 0; flex: 1; min-width: 0; }
.field--pick { display: flex; align-items: center; flex: none; width: 83px; }
.field--pick select { flex: 1; min-width: 0; appearance: none; border: 0; padding: 0; background: none; outline: 0; }
.action { width: 29px; height: 24px; flex: none; background: #cce4f7; display: flex; align-items: center; justify-content: center; }
.dialog__foot { position: relative; display: flex; justify-content: flex-end; gap: 12px; padding: 13px 12px 12px; }
.push { width: 101px; height: 26px; background: #e1e1e1; border: 1px solid #adadad; padding-top: 2px; }
.resize { position: absolute; right: 3px; bottom: 2px; }

.status { display: flex; align-items: stretch; height: 27px; flex: none; padding-top: 2px; background: #f7f7f7; line-height: 26px; white-space: nowrap; }
.status__message { flex: 1; padding-left: 6px; }
.mode { padding: 2px 4px 0; border: 1px solid transparent; border-width: 1px 0 0 1px; line-height: 20px; }
.mode + .mode { margin-left: 3px; }
.mode--on { background: #ececec; border-color: #bdbdbd; padding-right: 6px; }
.cell { width: 94px; border-left: 1px solid #d8d8d8; padding-left: 4px; }
.cell--a { width: 101px; }
.cell--b { width: 131px; }
.cell--c { width: 194px; }
.cell--d { width: 81px; }
.cell--grip { width: 20px; padding: 12px 0 0 6px; }
```
